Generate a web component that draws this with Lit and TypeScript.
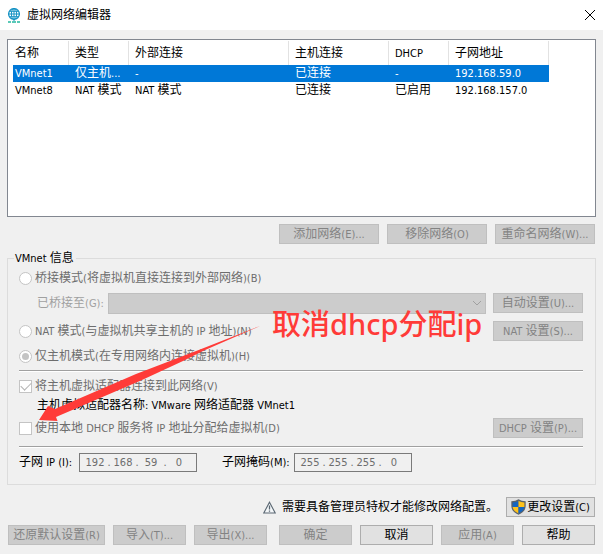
import { LitElement, html, css, svg } from "lit";
import { customElement } from "lit/decorators.js";

/** Latin runs are set one size smaller than the Chinese around them. */
const mix = (text: string) =>
  text
    .split(/([\x20-\x7e]+)/)
    .filter((part) => part !== "")
    .map((part) => (/^[\x20-\x7e]/.test(part) ? html`<span class="latin">${part}</span>` : part));

const columns = [
  { title: "名称", cls: "c-name" },
  { title: "类型", cls: "c-type" },
  { title: "外部连接", cls: "c-ext" },
  { title: "主机连接", cls: "c-host" },
  { title: "DHCP", cls: "c-dhcp" },
  { title: "子网地址", cls: "c-net" },
];

const networks = [
  { selected: true, cells: ["VMnet1", "仅主机...", "-", "已连接", "-", "192.168.59.0"] },
  { selected: false, cells: ["VMnet8", "NAT 模式", "NAT 模式", "已连接", "已启用", "192.168.157.0"] },
];

const globe = svg`<svg class="globe" width="14" height="15" viewBox="0 0 14 15" fill="none" stroke="#1592c4">
  <circle cx="7" cy="6" r="5.4" stroke-width="1.3"/>
  <ellipse cx="7" cy="6" rx="2.6" ry="5.4"/>
  <path d="M7 .6V13M1.6 6h10.800M2.6 3.300h8.800M2.600 8.700h8.800"/>
  <path d="M1 14h3M5 14h4M10 14h3" stroke="#25b8a0" stroke-width="1.3"/>
</svg>`;

const closeMark = svg`<svg width="12" height="12" viewBox="0 0 12 12" fill="none" stroke="#000">
  <path d="M1 1l10 10M11 1L1 11"/>
</svg>`;

const warning = svg`<svg class="warning" width="13" height="13" viewBox="0 0 13 13" fill="none">
  <path d="M6.5 1.2L12.2 12H.8z" stroke="#5a6772" stroke-width="1.1" fill="#f4f7f9"/>
  <path d="M6.5 4.6v4M6.5 9.6v1.2" stroke="#5a6772" stroke-width="1.3"/>
</svg>`;

const shield = svg`<svg width="15" height="16" viewBox="0 0 14 16" preserveAspectRatio="none">
  <path d="M7 .3C5.200 1.600 3 2.200.3 2.200V7c0 4.200 2.900 7.100 6.700 8.700C10.800 14.100 13.700 11.200 13.700 7V2.200C11 2.200 8.800 1.600 7 .3z" fill="#5b6168"/>
  <path d="M7 1.800C5.500 2.800 3.500 3.300 1.500 3.400V8H7z" fill="#1565c0"/>
  <path d="M7 1.800c1.500 1 3.500 1.500 5.500 1.600V8H7z" fill="#ffc21a"/>
  <path d="M1.500 8H7v6.400C4 13 1.900 10.900 1.500 8z" fill="#ffc21a"/>
  <path d="M12.500 8H7v6.400c3-1.400 5.100-3.500 5.500-6.400z" fill="#1565c0"/>
</svg>`;

@customElement("app-root")
export class AppRoot extends LitElement {
  static styles = css`
    :host {
      display: block;
      position: relative;
      min-height: 100vh;
      background: #f0f0f0;
      color: #000;
      font: 12px/16px "DejaVu Sans Condensed", "Noto Sans CJK SC", sans-serif;
      white-space: nowrap;
    }
    * { box-sizing: border-box; }
    .latin { font-size: 11px; white-space: pre; }
    .titlebar {
      display: flex;
      align-items: center;
      height: 30px;
      padding: 0 7px;
      background: #fff;
    }
    .globe { margin-right: 6px; }
    h1 { margin: 0; font-size: 12px; font-weight: 400; flex: 1; }
    .close {
      display: flex;
      border: 0;
      padding: 0;
      background: none;
    }
    main { padding: 9px 7px; }
    .list {
      height: 178px;
      border: 1px solid #828790;
      background: #fff;
      padding: 1px 5px;
      overflow: hidden;
    }
    table { border-spacing: 0; table-layout: fixed; width: 536px; }
    th, td { padding: 0 0 0 6px; text-align: left; font-weight: 400; overflow: hidden; }
    th:first-child, td:first-child { padding-left: 2px; }
    th { height: 24px; border-right: 1px solid #e2e2e2; }
    td { height: 17px; line-height: 17px; }
    .selected { background: #0078d7; color: #fff; }
    .c-name { width: 56px; }
    .c-type, .c-dhcp { width: 60px; }
    .c-ext { width: 160px; }
    .c-host, .c-net { width: 100px; }
    .btn {
      display: flex;
      align-items: center;
      justify-content: center;
      height: 20px;
      padding: 0;
      border: 1px solid #adadad;
      background: #e1e1e1;
      color: #000;
      font: inherit;
      flex: none;
    }
    .btn:disabled { background: #ccc; border-color: #bfbfbf; color: #838383; }
    .w100 { width: 100px; }
    .w97 { width: 97px; }
    .w90 { width: 90px; }
    .w73 { width: 73px; }
    .bar { display: flex; align-items: center; gap: 8px; padding: 0 1px; }
    .end { justify-content: flex-end; }
    .net-actions { margin: 7px 0 6px; }
    fieldset {
      margin: 0;
      min-width: 0;
      border: 1px solid #dcdcdc;
      padding: 0 12px 12px 11px;
    }
    legend { padding: 0 2px 0 1px; margin-left: -5px; height: 16px; }
    .row { display: flex; align-items: center; height: 24px; }
    .row.mid { height: 26px; }
    .row.wide { height: 28px; }
    .row.tall { height: 30px; }
    .row.low { height: 20px; }
    .push { margin-left: auto; }
    .opt { display: flex; align-items: center; gap: 3px; color: #6d6d6d; }
    .opt input {
      appearance: none;
      display: grid;
      place-items: center;
      width: 13px;
      height: 13px;
      margin: 0;
      border: 1px solid #c4c4c4;
      background: #fff;
    }
    .opt input[type="radio"] { border-radius: 50%; }
    .opt input[type="radio"]:checked::after {
      content: "";
      width: 7px;
      height: 7px;
      border-radius: 50%;
      background: #c4c4c4;
    }
    .opt input[type="checkbox"]:checked::after {
      content: "";
      width: 9px;
      height: 5px;
      border: solid #b4b4b4;
      border-width: 0 0 1px 1px;
      transform: translateY(-1px) rotate(-45deg);
    }
    .bridge-label { width: 89px; padding-left: 18px; color: #a0a0a0; }
    .combo { position: relative; flex: 1; display: flex; margin-right: 7px; }
    select {
      appearance: none;
      width: 100%;
      height: 21px;
      border: 1px solid #bfbfbf;
      border-radius: 0;
      background: #ccc;
      font: inherit;
      opacity: 1;
    }
    .chevron { position: absolute; right: 4px; top: 7px; pointer-events: none; }
    hr {
      margin: 4px 0;
      border: 0;
      border-top: 1px solid #a0a0a0;
      border-bottom: 1px solid #fff;
    }
    .adapter { height: 18px; line-height: 18px; padding-left: 18px; }
    .addresses { display: flex; align-items: center; padding-top: 1px; }
    .first-label { width: 60px; }
    .second-label { width: 72px; margin-left: 25px; }
    .ip {
      display: flex;
      align-items: center;
      width: 118px;
      height: 19px;
      border: 1px solid #7a7a7a;
      padding: 0 3px;
      color: #6d6d6d;
      font-size: 11px;
    }
    .ip input {
      width: 24px;
      border: 0;
      padding: 0;
      background: none;
      color: inherit;
      font: inherit;
      text-align: center;
    }
    .ip span { width: 4px; text-align: center; }
    .notice { margin-top: 12px; }
    .warning { margin-right: -2px; }
    .elevate { width: 89px; gap: 1px; }
    .footer { margin-top: 8px; }
    .gap { margin-left: auto; }
    .arrow { position: absolute; left: 36px; top: 322px; }
    .note {
      position: absolute;
      left: 272px;
      top: 306px;
      color: #ff3b38;
      font: 500 29px/36px "Noto Sans", "Noto Sans CJK SC", sans-serif;
    }
  `;

  private button(label: string, width: string, disabled = true) {
    return html`<button class="btn ${width}" ?disabled=${disabled}><span>${mix(label)}</span></button>`;
  }

  private option(type: string, label: string, checked = false) {
    return html`<label class="opt">
      <input type=${type} name=${type === "radio" ? "mode" : label} ?checked=${checked} disabled />
      <span>${mix(label)}</span>
    </label>`;
  }

  private address(id: string, parts: string[]) {
    return html`<div class="ip" role="group" aria-labelledby=${id}>
      ${parts.map(
        (p, i) => html`${i ? html`<span>.</span>` : ""}<input type="text" aria-labelledby=${id} .value=${p} disabled />`
      )}
    </div>`;
  }

  render() {
    return html`
      <header class="titlebar">
        ${globe}
        <h1>虚拟网络编辑器</h1>
        <button class="close" aria-label="关闭">${closeMark}</button>
      </header>
      <main>
        <div class="list">
          <table>
            <thead>
              <tr>${columns.map((c) => html`<th class=${c.cls}>${mix(c.title)}</th>`)}</tr>
            </thead>
            <tbody>
              ${networks.map(
                (n) => html`<tr class=${n.selected ? "selected" : ""}>
                  ${n.cells.map((c) => html`<td>${mix(c)}</td>`)}
                </tr>`
              )}
            </tbody>
          </table>
        </div>
        <div class="bar end net-actions">
          ${this.button("添加网络(E)...", "w100")}
          ${this.button("移除网络(O)", "w100")}
          ${this.button("重命名网络(W)...", "w100")}
        </div>
        <fieldset>
          <legend>${mix("VMnet 信息")}</legend>
          <div class="row">${this.option("radio", "桥接模式(将虚拟机直接连接到外部网络)(B)")}</div>
          <div class="row mid">
            <label class="bridge-label" for="bridge">${mix("已桥接至(G):")}</label>
            <div class="combo">
              <select id="bridge" disabled></select>
              <svg class="chevron" width="10" height="7" viewBox="0 0 10 7" fill="none" stroke="#a0a0a0">
                <path d="M1 1l4 4 4-4" />
              </svg>
            </div>
            ${this.button("自动设置(U)...", "w90")}
          </div>
          <div class="row tall">
            ${this.option("radio", "NAT 模式(与虚拟机共享主机的 IP 地址)(N)")}
            <div class="push">${this.button("NAT 设置(S)...", "w90")}</div>
          </div>
          <div class="row low">${this.option("radio", "仅主机模式(在专用网络内连接虚拟机)(H)", true)}</div>
          <hr />
          <div class="row low">${this.option("checkbox", "将主机虚拟适配器连接到此网络(V)", true)}</div>
          <div class="adapter">${mix("主机虚拟适配器名称: VMware 网络适配器 VMnet1")}</div>
          <div class="row wide">
            ${this.option("checkbox", "使用本地 DHCP 服务将 IP 地址分配给虚拟机(D)")}
            <div class="push">${this.button("DHCP 设置(P)...", "w90")}</div>
          </div>
          <hr />
          <div class="addresses">
            <span class="first-label" id="subnet">${mix("子网 IP (I):")}</span>
            ${this.address("subnet", ["192", "168", "59", "0"])}
            <span class="second-label" id="mask">${mix("子网掩码(M):")}</span>
            ${this.address("mask", ["255", "255", "255", "0"])}
          </div>
        </fieldset>
        <div class="bar end notice">
          ${warning}
          <span>需要具备管理员特权才能修改网络配置。</span>
          <button class="btn elevate">${shield}<span>${mix("更改设置(C)")}</span></button>
        </div>
        <div class="bar footer">
          ${this.button("还原默认设置(R)", "w97")}
          ${this.button("导入(T)...", "w73")}
          ${this.button("导出(X)...", "w73")}
          ${this.button("确定", "w73 gap")}
          ${this.button("取消", "w73", false)}
          ${this.button("应用(A)", "w73")}
          ${this.button("帮助", "w73", false)}
        </div>
      </main>
      <svg class="arrow" width="228" height="104" viewBox="36 322 228 104" fill="#ff3b38">
        <path d="M260 326L200 349.500 136 374 55 409 48 406 39 420 57.500 421 56 417 142 380 183 361 204 350.500z" />
      </svg>
      <div class="note">取消dhcp分配ip</div>
    `;
  }
}
